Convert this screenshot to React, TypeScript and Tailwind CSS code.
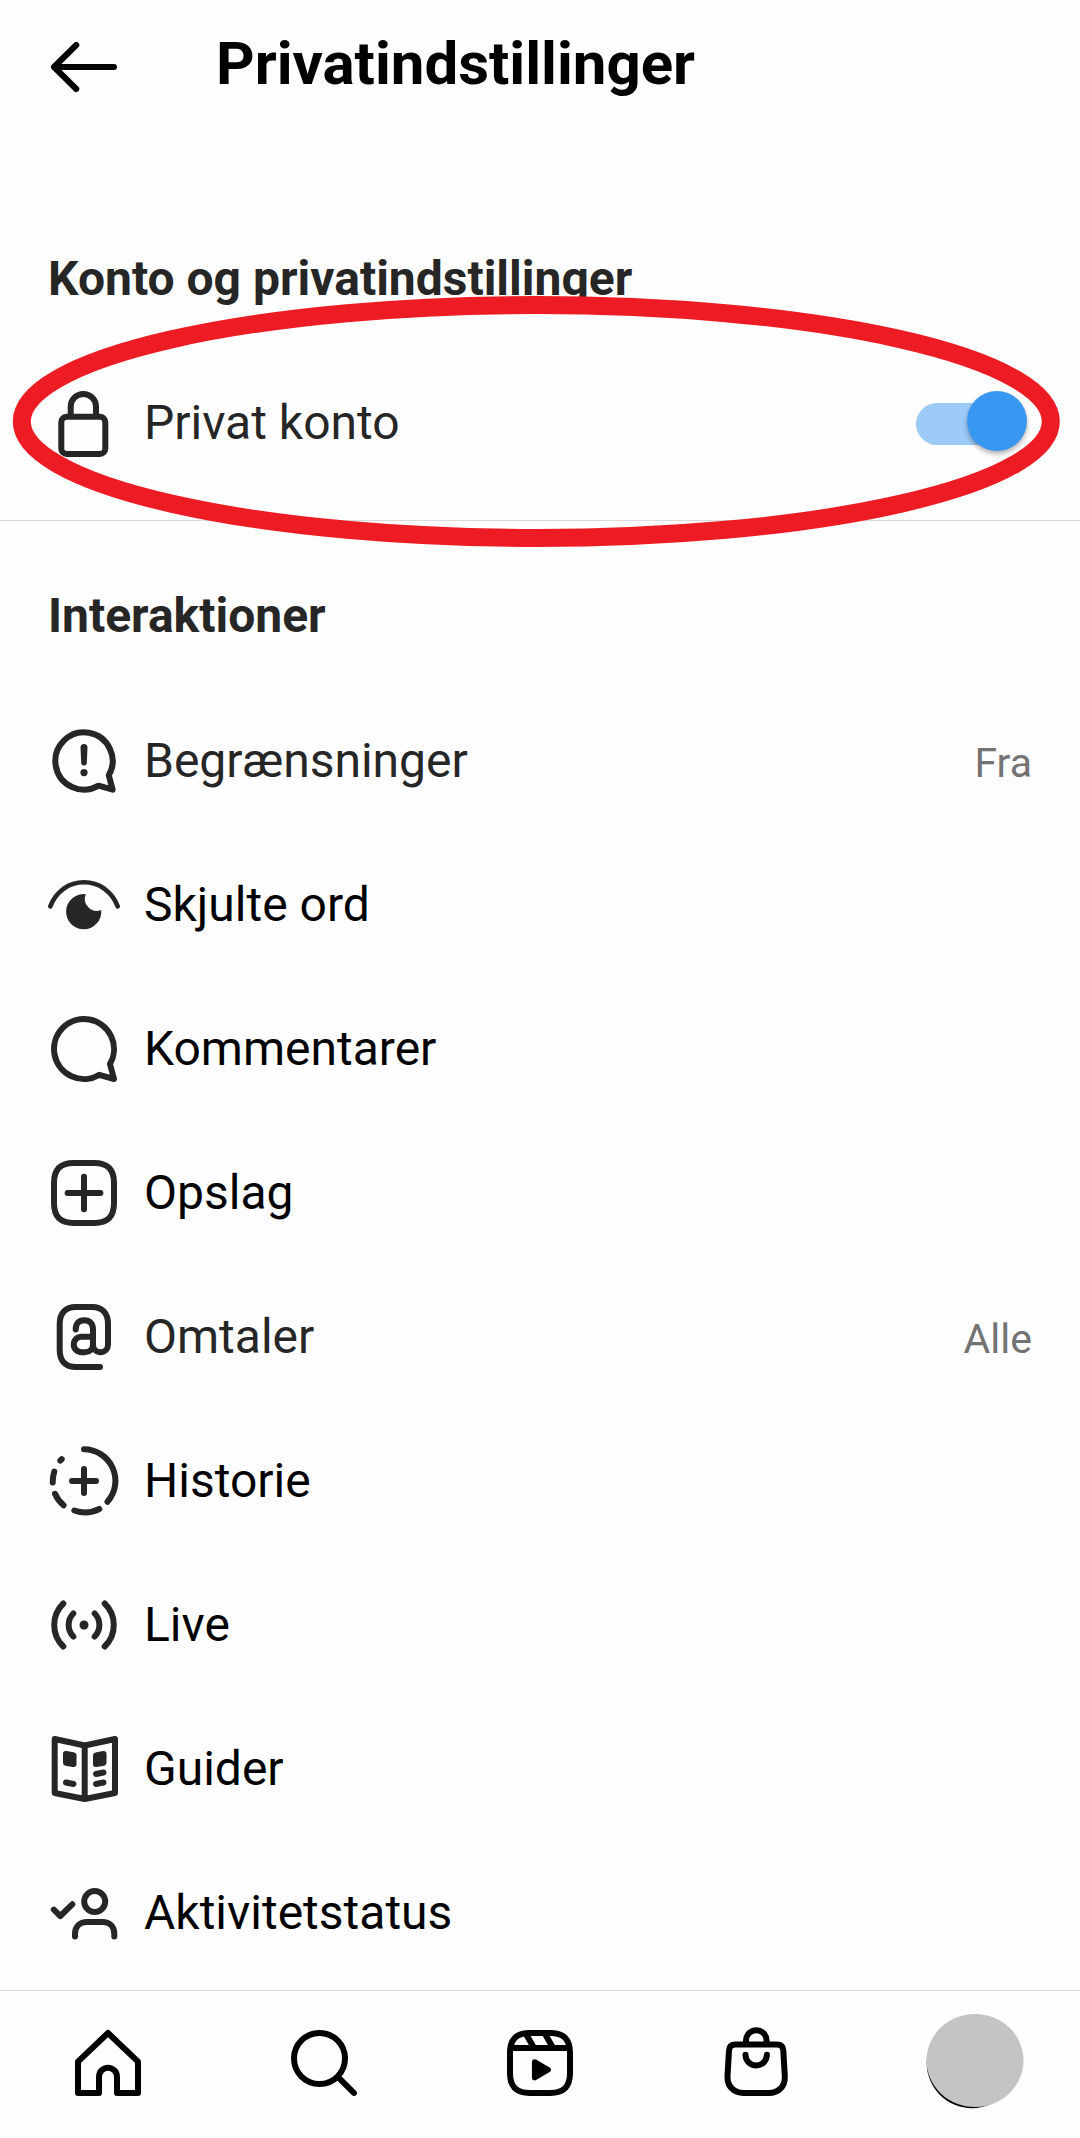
import type { ReactNode } from "react";

type RowProps = {
  icon: ReactNode;
  label: string;
  value?: string;
  muted?: boolean;
};

const ROUNDED_SQUARE =
  "M2 12v3.45c0 2.849.698 4.005 1.606 4.944.94.909 2.098 1.608 4.946 1.608h6.896c2.848 0 4.006-.7 4.946-1.608C21.302 19.455 22 18.3 22 15.45V8.552c0-2.849-.698-4.006-1.606-4.945C19.454 2.7 18.296 2 15.448 2H8.552c-2.848 0-4.006.699-4.946 1.607C2.698 4.547 2 5.703 2 8.552Z";

// Icons drawn on a 24 unit grid
function Icon24({ children }: { children: ReactNode }) {
  return (
    <svg
      className="h-[72px] w-[72px] shrink-0"
      viewBox="0 0 24 24"
      fill="none"
      stroke="currentColor"
      strokeWidth={2}
      strokeLinecap="round"
      strokeLinejoin="round"
    >
      {children}
    </svg>
  );
}

// Icons drawn on a 72 unit grid
function Icon72({ children }: { children: ReactNode }) {
  return (
    <svg
      className="h-[72px] w-[72px] shrink-0"
      viewBox="0 0 72 72"
      fill="none"
      stroke="currentColor"
      strokeWidth={6}
      strokeLinecap="round"
      strokeLinejoin="round"
    >
      {children}
    </svg>
  );
}

const LockIcon = () => (
  <Icon72>
    <rect x="13.3" y="29.7" width="44" height="37.3" rx="5.5" />
    <path d="M23.7 29V19.6a12.6 12.6 0 0 1 25.3 0V29" transform="translate(-1 0)" />
  </Icon72>
);

const LimitsIcon = () => (
  <Icon72>
    <path
      transform="translate(1.6 1.6) scale(2.865)"
      strokeWidth={2.1}
      d="M20.656 17.008a9.993 9.993 0 1 0-3.59 3.615L22 22Z"
    />
    <path
      d="M32.5 22.5a3.5 3.5 0 0 1 7 0l-.7 15.2a2.8 2.8 0 0 1-5.6 0Z"
      fill="currentColor"
      stroke="none"
    />
    <circle cx="36" cy="47.6" r="3.6" fill="currentColor" stroke="none" />
  </Icon72>
);

const HiddenWordsIcon = () => (
  <Icon72>
    <path strokeWidth={4.6} d="M2.3 37.3C8.3 22 21 13.3 36 13.3s27.7 8.7 33.7 24" />
    <path
      d="M37.8 25.2A17.6 17.6 0 1 0 53.2 41A12 12 0 0 1 37.8 25.2Z"
      fill="currentColor"
      stroke="none"
    />
  </Icon72>
);

const CommentIcon = () => (
  <Icon24>
    <path d="M20.656 17.008a9.993 9.993 0 1 0-3.59 3.615L22 22Z" />
  </Icon24>
);

const PostIcon = () => (
  <Icon24>
    <path d={ROUNDED_SQUARE} />
    <path d="M6.545 12h10.91M12 6.545v10.91" />
  </Icon24>
);

const MentionIcon = () => (
  <Icon72>
    <path d="M27.7 28.5C27.7 22.5 31 19.3 36.3 19.3S45 22.5 45 28.5V43.5C45 48 41.5 51.2 37 51.2H33.5A7.7 7.7 0 0 1 33.5 35.7H45" />
    <path d="M45 43.5C45 48 48 51.2 52.5 51.2S60 48 60 43.5V23C60 12 54 6 44 6H28C17.5 6 11.7 12 11.7 23V49C11.7 60 17.5 66 28 66H52" />
  </Icon72>
);

const StoryIcon = () => (
  <Icon72>
    <path d="M36 4.3A31.5 31.5 0 0 1 59.5 56.7" />
    <path d="M51.3 64A31.7 31.7 0 0 1 26.3 65.5" />
    <path d="M15.6 60.3A31.7 31.7 0 0 1 7 48.8" />
    <path d="M4.7 37.5A31.7 31.7 0 0 1 6.3 26.5" />
    <path d="M12.3 15.6L13.7 14.2" />
    <path d="M24 36h24M36 24v24" />
  </Icon72>
);

const LiveIcon = () => (
  <Icon72>
    <circle cx="36" cy="36" r="4.5" fill="currentColor" stroke="none" />
    <path d="M15.3 14.5A30 30 0 0 0 15.3 57.5M56.7 14.5A30 30 0 0 1 56.7 57.5" />
    <path d="M25.3 24.5A16.5 16.5 0 0 0 25.3 47.5M46.7 24.5A16.5 16.5 0 0 1 46.7 47.5" />
  </Icon72>
);

const GuideIcon = () => (
  <Icon72>
    <path d="M6.7 6L36.7 12.5L67 6V60L36.7 66L6.7 60ZM36.7 12.5V66" />
    <path
      d="M18.5 18L25.5 19.2Q28.5 19.7 28.5 22.5V31Q28.5 34.5 25 34L18.5 33Q15 32.5 15 29.5V21Q15 17.5 18.5 18Z"
      fill="currentColor"
      stroke="none"
    />
    <path
      d="M55 18L48.5 19.2Q45 19.7 45 22.5V31Q45 34.5 48.5 34L55 33Q58.5 32.5 58.5 29.5V21Q58.5 17.5 55 18Z"
      fill="currentColor"
      stroke="none"
    />
    <path d="M18 49.5L25.5 51M48 41L55.5 39.5M48 51L55.5 49.5" />
  </Icon72>
);

const ActivityIcon = () => (
  <Icon72>
    <circle cx="46.7" cy="24.5" r="10.5" />
    <path d="M27 59.5V57C27 49.5 32 45 39 45H54.5C61.5 45 66.3 49.5 66.3 57V59.5" />
    <path d="M5.8 32.7L12.3 39L24.3 27.3" />
  </Icon72>
);

function Row({ icon, label, value, muted }: RowProps) {
  return (
    <div className="flex h-36 items-center px-12 text-[#262626]">
      {icon}
      <span
        className={
          muted
            ? "ml-6 text-5xl leading-none text-[#262626]"
            : "ml-6 text-5xl leading-none text-black"
        }
      >
        {label}
      </span>
      {value && (
        <span className="mt-1 ml-auto text-[41px] leading-none text-[#737373]">{value}</span>
      )}
    </div>
  );
}

function Toggle() {
  return (
    <div className="relative mb-1 ml-auto h-[60px] w-[111px]">
      <div className="absolute top-3 left-0 h-[42px] w-[98px] rounded-full bg-[#9ccbf8]" />
      <div className="absolute top-0 right-0 h-[60px] w-[60px] rounded-full bg-[#3897f0] shadow-[0_3px_5px_rgba(0,0,0,0.3)]" />
    </div>
  );
}

const rows: RowProps[] = [
  { icon: <LimitsIcon />, label: "Begrænsninger", value: "Fra", muted: true },
  { icon: <HiddenWordsIcon />, label: "Skjulte ord" },
  { icon: <CommentIcon />, label: "Kommentarer" },
  { icon: <PostIcon />, label: "Opslag" },
  { icon: <MentionIcon />, label: "Omtaler", value: "Alle", muted: true },
  { icon: <StoryIcon />, label: "Historie" },
  { icon: <LiveIcon />, label: "Live" },
  { icon: <GuideIcon />, label: "Guider" },
  { icon: <ActivityIcon />, label: "Aktivitetstatus" },
];

function BottomNav() {
  return (
    <nav className="grid h-[148px] grid-cols-5 items-center justify-items-center border-t border-[#dbdbdb] pb-[3px] text-black">
      <Icon24>
        <path d="M9.005 16.545a2.997 2.997 0 0 1 2.997-2.997A2.997 2.997 0 0 1 15 16.545V22h7V11.543L12 2 2 11.543V22h7.005Z" />
      </Icon24>
      <Icon24>
        <path d="M19 10.5A8.5 8.5 0 1 1 10.5 2a8.5 8.5 0 0 1 8.5 8.5ZM16.511 16.511 22 22" />
      </Icon24>
      <Icon24>
        <path d={ROUNDED_SQUARE} />
        <path
          d="M2.05 7.002h19.9M13.504 2.001l2.858 5.001M7.207 2.11l2.795 4.892"
          strokeLinecap="butt"
        />
        <path
          d="M9.763 17.664a.908.908 0 0 1-.454-.787V11.63a.909.909 0 0 1 1.364-.788l4.545 2.624a.909.909 0 0 1 0 1.575l-4.545 2.624a.91.91 0 0 1-.91 0Z"
          fill="currentColor"
          stroke="none"
        />
      </Icon24>
      <Icon72>
        <path d="M15.5 17.5H57Q63 17.5 63.3 23.5L64.8 49C65.3 59.5 58.5 66 49 66H23.5C14 66 7 59.5 7.5 49L9 23.5Q9.3 17.5 15.5 17.5Z" />
        <path d="M26 17V13.5a10.3 10.3 0 0 1 20.6 0V17" />
        <path d="M25.5 27.7a10.7 10.7 0 0 0 21.4 0" />
      </Icon72>
      <svg className="mb-[5px] ml-1.5 h-[98px] w-[98px]" viewBox="0 0 98 98">
        <circle cx="46" cy="51" r="45.3" fill="#000" />
        <ellipse cx="49" cy="48.5" rx="48.5" ry="46.6" fill="#c5c3c6" />
      </svg>
    </nav>
  );
}

export default function App() {
  return (
    <div className="flex h-[2138px] w-[1080px] flex-col overflow-hidden bg-[#fefefe] font-[Roboto,sans-serif]">
      <header className="flex h-[132px] items-center pl-12 text-black">
        <Icon72>
          <path d="M6 37H66M28.3 15L6 37L28.3 59" />
        </Icon72>
        <h1 className="mb-1 ml-24 text-[60px] leading-none font-bold">Privatindstillinger</h1>
      </header>

      <section className="relative h-[389px] border-b border-[#dbdbdb] pt-[123px]">
        <h2 className="pl-12 text-5xl leading-[48px] font-bold text-[#262626]">
          Konto og privatindstillinger
        </h2>
        <div className="mt-12 flex h-36 items-center pr-[53px] pl-12 text-[#262626]">
          <LockIcon />
          <span className="ml-6 text-5xl leading-none">Privat konto</span>
          <Toggle />
        </div>
        {/* Highlight ring around the private account row */}
        <svg
          className="absolute top-[152px] left-0 h-[280px] w-[1080px]"
          viewBox="0 0 1080 280"
          fill="none"
        >
          <ellipse cx="536.3" cy="137.5" rx="514.5" ry="116.5" stroke="#ed1c24" strokeWidth={18} />
        </svg>
      </section>

      <section className="h-[1469px] pt-[71px]">
        <h2 className="pl-12 text-5xl leading-[48px] font-bold text-[#262626]">Interaktioner</h2>
        <div className="mt-[49px]">
          {rows.map((row) => (
            <Row key={row.label} {...row} />
          ))}
        </div>
      </section>

      <BottomNav />
    </div>
  );
}
